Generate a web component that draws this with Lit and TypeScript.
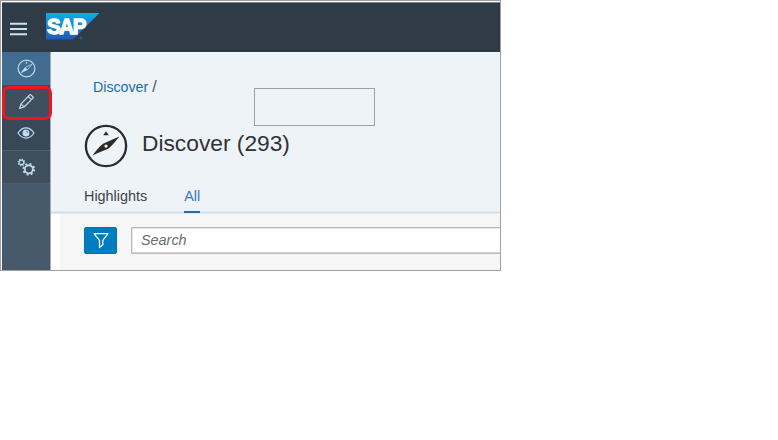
import { LitElement, html, css, svg } from "lit";
import { customElement } from "lit/decorators.js";

const compass = svg`<circle cx="22" cy="22" r="20.1" fill="none" stroke="currentColor" stroke-width="2.3"/>
  <path fill="currentColor" fill-rule="evenodd" d="M35.300 12.500 C31 18 28 21.500 25 24.300 C20 26.500 14 29 8.500 31.500 C12 26.500 15.500 22.500 19 19.700 Z M22 20.500 a1.600 1.600 0 1 0 .01 0 Z"/>
  <path fill="currentColor" d="M22 7.300 L24.800 11.200 H19.200 Z"/>`;

@customElement("side-item")
export class SideItem extends LitElement {
  static styles = css`
    :host { display: block; box-sizing: border-box; color: #c0dcf3; }
    .item { height: 100%; display: flex; justify-content: center; align-items: center; }
  `;
  render() {
    return html`<div class="item"><slot></slot></div>`;
  }
}

@customElement("app-root")
export class AppRoot extends LitElement {
  static styles = css`
    :host { display: block; width: 778px; height: 440px; background: #fff; font-family: "Liberation Sans", Arial, sans-serif; overflow: hidden; }
    svg { display: block; }
    .window { box-sizing: border-box; width: 501px; height: 271px; border: 1px solid #a0a0a0; padding: 1px 0 0 1px; display: flex; flex-direction: column; overflow: hidden; }
    .top { box-sizing: border-box; height: 50px; flex: none; background: linear-gradient(#7c838a 0 1px, #2f3c48 1px 48px, #2d3945 49px); display: flex; align-items: flex-start; padding: 11px 0 0 8px; }
    .menu { width: 17px; height: 14px; margin-top: 9px; }
    .logo { margin-left: 19px; }
    .body { flex: 1; display: flex; min-height: 0; }
    .side { width: 48px; flex: none; background: #475a6b; border-right: 1px solid #a3abb3; position: relative; }
    .discover { height: 33px; background: #426b90; }
    .edit { height: 33px; background: #3f4f5d; }
    .view { height: 33px; background: #394856; border-bottom: 1px solid #4f6171; }
    .gear { height: 33px; background: #3e4e5d; border-bottom: 1px solid #4b5e70; }
    .edit svg { margin-top: -1px; }
    .view svg { margin-top: -2px; }
    .ring { position: absolute; left: 0; top: 34px; width: 44px; height: 28px; border: 3px solid #ef151d; border-radius: 7px; z-index: 1; }
    .main { flex: 1; min-width: 0; display: flex; flex-direction: column; }
    .head { box-sizing: border-box; height: 161px; flex: none; background: linear-gradient(#f8fafc 0 1px, #eef3f8 1px); border-bottom: 1px solid #c9deef; padding-left: 33px; position: relative; box-shadow: 0 1px #e1ebf3, inset 0 -1px #deebf5; }
    .crumbs { padding: 27px 0 0 9px; font-size: 14.2px; line-height: 16px; color: #555; display: flex; align-items: center; gap: 4px; }
    .crumbs a { color: #1272ad; }
    .slash { font-size: 16px; }
    .title { display: flex; align-items: center; gap: 14px; height: 44px; margin-top: 29px; color: #2b2b2b; }
    h1 { margin: -7px 0 0; font-size: 22.75px; line-height: 28px; font-weight: 400; color: #303236; }
    .tabs { display: flex; gap: 37px; margin-top: 19px; font-size: 14.4px; line-height: 18px; color: #414447; }
    .tab { height: 26px; box-sizing: border-box; position: relative; }
    .active { color: #3c79b5; border-bottom: 2px solid #286daa; }
    .frame { position: absolute; left: 203px; top: 36px; width: 119px; height: 36px; border: 1px solid #a0a0a0; }
    .tools { flex: 1; display: flex; align-items: flex-start; padding: 14px 0 0 24px; margin-left: 9px; background: #f6f6f6; }
    .filter { width: 33px; height: 27px; flex: none; background: #007cc0; border: 1px solid #0870ad; box-sizing: border-box; border-radius: 2px; display: flex; align-items: center; justify-content: center; }
    .search { box-sizing: border-box; flex: 1; height: 27px; margin-left: 14px; background: #fff; border: 1px solid #bcbcbc; border-right: 0; box-shadow: inset 1px 1px #e5e5e5, inset 0 -1px #d2d2d2; padding-left: 9px; font-size: 14.4px; font-style: italic; line-height: 24px; color: #6c6c6c; }
  `;

  render() {
    return html`<div class="window">
      <div class="top">
        <svg class="menu" viewBox="0 0 17 14"><path d="M0 1.700h17M0 7h17M0 12.200h17" stroke="#c9e2f2" stroke-width="2.100"/></svg>
        <svg class="logo" width="54" height="28" viewBox="0 0 54 28">
          <defs><linearGradient id="g" x2="0" y2="1"><stop stop-color="#0eaee8"/><stop offset=".55" stop-color="#177fd0"/><stop offset="1" stop-color="#2158b8"/></linearGradient></defs>
          <path d="M0 0h53.500L27 26.500H0Z" fill="url(#g)"/>
          <text x="1" y="21.300" font-family="Liberation Sans" font-weight="700" font-size="22" textLength="38" lengthAdjust="spacingAndGlyphs" letter-spacing="-1.500" fill="#fff" stroke="#fff" stroke-width="1.300">SAP</text>
          <circle cx="35" cy="25" r="1.600" fill="#25578f"/>
        </svg>
      </div>
      <div class="body">
        <div class="side">
          <side-item class="discover"><svg width="19" height="19" viewBox="0 0 19 19" fill="none" stroke="currentColor"><circle cx="9.500" cy="9.500" r="8.400" stroke-width="1.200"/><path d="M15 5.200 10.600 10.600 4 13.800 8.400 8.400Z" stroke-width=".7"/><path d="m8.400 8.400 2.200 2.200L4 13.800Z" fill="currentColor" stroke="none"/><path d="M9.500 3v1.600" stroke-width="1.400"/></svg></side-item>
          <side-item class="edit"><svg width="17" height="17" viewBox="0 0 17 17" fill="none" stroke="currentColor" stroke-width="1.200" stroke-linejoin="round"><path d="M1.600 15.400 3 10.900 11.700 1.900Q12.300 1.300 12.900 1.900L15 4Q15.600 4.600 15 5.200L6 14ZM3 10.900 6 14M10.200 3.500l3.200 3.200"/></svg></side-item>
          <side-item class="view"><svg width="18" height="14" viewBox="0 0 18 14"><path d="M1 7Q4.500 1.900 9 1.900T17 7Q13.500 12.100 9 12.100T1 7Z" fill="none" stroke="currentColor" stroke-width="1.200"/><circle cx="9" cy="6.900" r="3.500" fill="currentColor"/><path d="M9.200 5.100a1.800 1.800 0 0 1 1.700 1.800" fill="none" stroke="#394856" stroke-width=".7"/></svg></side-item>
          <side-item class="gear"><svg width="19" height="19" viewBox="0 0 19 19" fill="none" stroke="currentColor"><circle cx="4.400" cy="4.400" r="2.300" stroke-width="1.200"/><circle cx="4.400" cy="4.400" r="3.200" stroke-width="1.300" stroke-dasharray="1.250 1.263"/><circle cx="11.800" cy="11.300" r="4" stroke-width="1.700"/><circle cx="11.800" cy="11.300" r="5.400" stroke-width="1.800" stroke-dasharray="2.100 2.141"/></svg></side-item>
          <div class="ring"></div>
        </div>
        <div class="main">
          <div class="head">
            <div class="crumbs"><a>Discover</a><span class="slash">/</span></div>
            <div class="title"><svg width="44" height="44" viewBox="0 0 44 44">${compass}</svg><h1>Discover (293)</h1></div>
            <div class="tabs"><div class="tab">Highlights</div><div class="tab active">All</div></div>
            <div class="frame"></div>
          </div>
          <div class="tools">
            <div class="filter"><svg width="16" height="17" viewBox="0 0 16 17"><path d="M1 1.700H15L9.800 8.300V12.700L6.500 15.500V8.300Z" fill="none" stroke="#fff" stroke-width="1.300" stroke-linejoin="round"/></svg></div>
            <div class="search">Search</div>
          </div>
        </div>
      </div>
    </div>`;
  }
}
